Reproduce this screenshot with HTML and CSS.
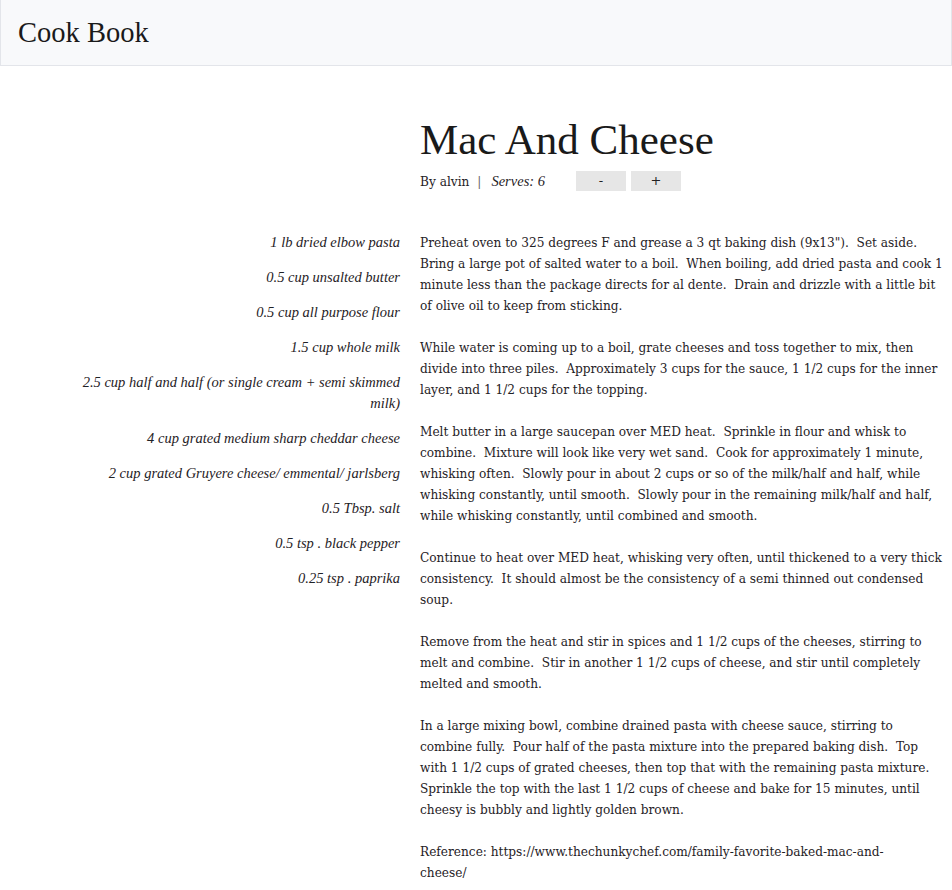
FILE: index.html
```html
<!DOCTYPE html>
<html lang="en">
<head>
<meta charset="utf-8">
<title>Cook Book</title>
<link rel="stylesheet" href="styles.css">
</head>
<body>
<header class="topbar">
  <div class="brand">Cook Book</div>
</header>
<main class="recipe">
  <div class="recipe-head">
    <h1 class="recipe-title">Mac And Cheese</h1>
    <div class="meta">
      <span class="author">By alvin</span><span class="sep">|</span><span class="serves">Serves: 6</span>
      <span class="controls"><button class="btn">-</button><button class="btn">+</button></span>
    </div>
  </div>
  <ul class="ingredients">
    <li>1 lb dried elbow pasta</li>
    <li>0.5 cup unsalted butter</li>
    <li>0.5 cup all purpose flour</li>
    <li>1.5 cup whole milk</li>
    <li>2.5 cup half and half (or single cream + semi skimmed milk)</li>
    <li>4 cup grated medium sharp cheddar cheese</li>
    <li>2 cup grated Gruyere cheese/ emmental/ jarlsberg</li>
    <li>0.5 Tbsp. salt</li>
    <li>0.5 tsp . black pepper</li>
    <li>0.25 tsp . paprika</li>
  </ul>
  <div class="directions">
    <div class="steps">Preheat oven to 325 degrees F and grease a 3 qt baking dish (9x13").  Set aside.  Bring a large pot of salted water to a boil.  When boiling, add dried pasta and cook 1 minute less than the package directs for al dente.  Drain and drizzle with a little bit of olive oil to keep from sticking.

While water is coming up to a boil, grate cheeses and toss together to mix, then divide into three piles.  Approximately 3 cups for the sauce, 1 1/2 cups for the inner layer, and 1 1/2 cups for the topping.

Melt butter in a large saucepan over MED heat.  Sprinkle in flour and whisk to combine.  Mixture will look like very wet sand.  Cook for approximately 1 minute, whisking often.  Slowly pour in about 2 cups or so of the milk/half and half, while whisking constantly, until smooth.  Slowly pour in the remaining milk/half and half, while whisking constantly, until combined and smooth.

Continue to heat over MED heat, whisking very often, until thickened to a very thick consistency.  It should almost be the consistency of a semi thinned out condensed soup.

Remove from the heat and stir in spices and 1 1/2 cups of the cheeses, stirring to melt and combine.  Stir in another 1 1/2 cups of cheese, and stir until completely melted and smooth.

In a large mixing bowl, combine drained pasta with cheese sauce, stirring to combine fully.  Pour half of the pasta mixture into the prepared baking dish.  Top with 1 1/2 cups of grated cheeses, then top that with the remaining pasta mixture.  Sprinkle the top with the last 1 1/2 cups of cheese and bake for 15 minutes, until cheesy is bubbly and lightly golden brown.</div>
    <div class="source">Reference: https://www.thechunkychef.com/family-favorite-baked-mac-and-cheese/</div>
  </div>
</main>
</body>
</html>
```
FILE: styles.css
```css
html, body {
  margin: 0;
  padding: 0;
  background: #ffffff;
}
body {
  font-family: "DejaVu Serif Condensed", "DejaVu Serif", serif;
  font-stretch: condensed;
  font-size: 13.5px;
  line-height: 21px;
  color: #1f2226;
}
.topbar {
  height: 65px;
  background: #f8f9fb;
  border: 1px solid #e3e5ea;
  border-top: none;
  display: flex;
  align-items: center;
  padding-left: 17px;
}
.brand {
  font-family: "Liberation Serif", serif;
  font-stretch: normal;
  font-size: 28.5px;
  line-height: 34px;
  color: #1a1a1a;
  padding-top: 1px;
}
.recipe {
  display: grid;
  grid-template-columns: 340px 525px;
  column-gap: 20px;
  padding: 49px 0 0 60px;
}
.recipe-head {
  grid-column: 2;
  margin-bottom: 41px;
}
.recipe-title {
  margin: 0;
  font-family: "Liberation Serif", serif;
  font-stretch: normal;
  font-size: 43px;
  line-height: 50px;
  font-weight: normal;
  color: #1a1a1a;
}
.meta {
  display: flex;
  align-items: center;
  margin-top: 6px;
  height: 20px;
}
.sep {
  margin: 0 10px 0 8px;
  color: #666;
}
.serves {
  font-family: "Liberation Serif", serif;
  font-stretch: normal;
  font-size: 14.5px;
  font-style: italic;
}
.controls {
  display: flex;
  gap: 5px;
  margin-left: 31px;
}
.btn {
  width: 50px;
  height: 20px;
  border: none;
  background: #e6e6e6;
  font-family: "DejaVu Serif", serif;
  font-size: 13px;
  line-height: 20px;
  padding: 0;
  color: #222;
}
.ingredients {
  grid-column: 1;
  list-style: none;
  margin: 0;
  padding: 0;
  text-align: right;
  font-family: "Liberation Serif", serif;
  font-stretch: normal;
  font-size: 14.5px;
  font-style: italic;
}
.ingredients li {
  margin-bottom: 14px;
}
.directions {
  grid-column: 2;
  padding-bottom: 10px;
}
.steps {
  white-space: pre-wrap;
}
.source {
  margin-top: 21px;
  max-width: 495px;
}
```
